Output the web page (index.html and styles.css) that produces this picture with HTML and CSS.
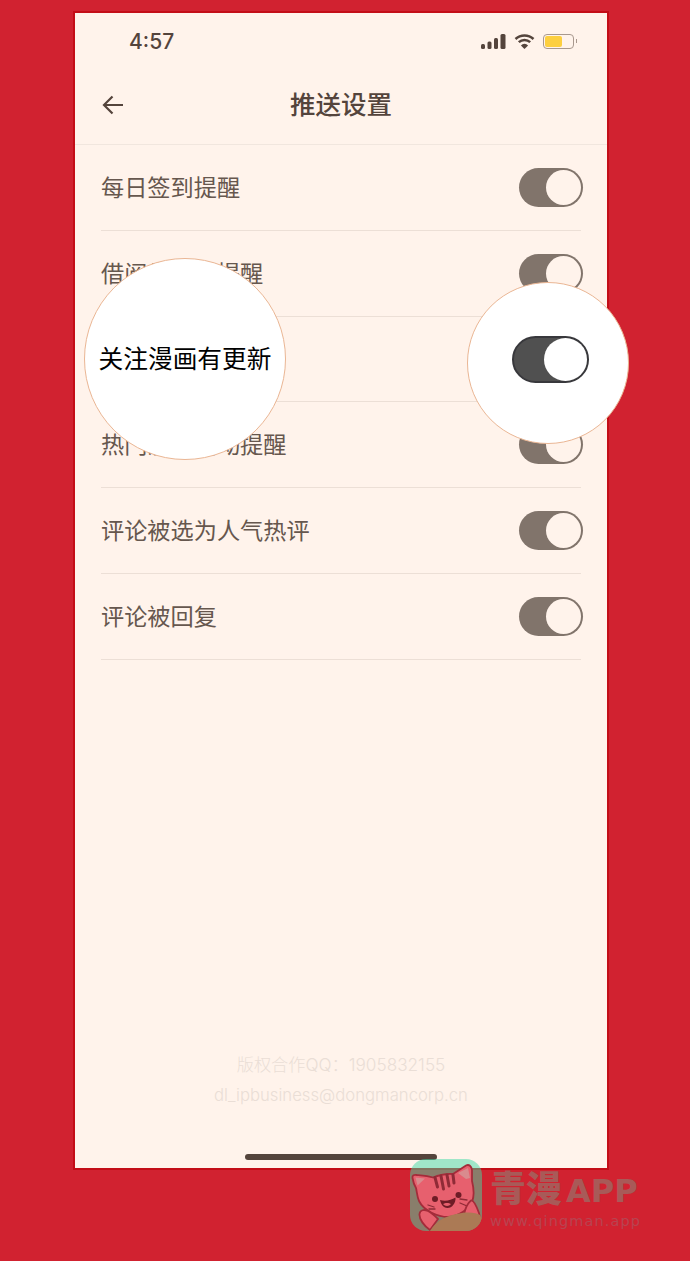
FILE: index.html
```html
<!DOCTYPE html>
<html lang="zh-CN">
<head>
    <meta charset="UTF-8">
    <meta name="viewport" content="width=device-width, initial-scale=1.0">
    <title>推送设置</title>
    <link rel="stylesheet" href="styles.css">
</head>
<body>
    <div class="phone">
        <div class="status">
            <span class="time">4:57</span>
            <div class="status-icons">
                <svg width="25" height="15" viewBox="0 0 25 15">
                    <rect x="0" y="10" width="4" height="5" rx="1.5" fill="#54443c"/>
                    <rect x="6.5" y="7.5" width="4" height="7.5" rx="1.5" fill="#54443c"/>
                    <rect x="13" y="4" width="4" height="11" rx="1.5" fill="#54443c"/>
                    <rect x="19.5" y="0" width="5" height="15" rx="1.5" fill="#54443c"/>
                </svg>
                <svg width="21" height="16" viewBox="0 0 21 16">
                    <path d="M1.5 6a13 13 0 0 1 18 0M4.8 9.2a8.4 8.4 0 0 1 11.4 0" fill="none" stroke="#54443c" stroke-width="2.5"/>
                    <path d="M10.5 16l-3.6-3.6a5 5 0 0 1 7.2 0z" fill="#54443c"/>
                </svg>
                <div class="battery"><div class="battery-fill"></div></div>
                <div class="battery-cap"></div>
            </div>
        </div>
        <div class="nav">
            <svg class="back" width="22" height="20" viewBox="0 0 22 20">
                <path d="M21 10H2M10.5 1.5L2 10l8.5 8.5" fill="none" stroke="#54443c" stroke-width="2.2"/>
            </svg>
            <h1>推送设置</h1>
        </div>
        <ul class="list">
            <li class="row"><span>每日签到提醒</span><div class="toggle"><div class="knob"></div></div></li>
            <li class="row"><span>借阅券到期提醒</span><div class="toggle"><div class="knob"></div></div></li>
            <li class="row"><span>关注漫画有更新</span><div class="toggle"><div class="knob"></div></div></li>
            <li class="row"><span>热门漫画活动提醒</span><div class="toggle"><div class="knob"></div></div></li>
            <li class="row"><span>评论被选为人气热评</span><div class="toggle"><div class="knob"></div></div></li>
            <li class="row"><span>评论被回复</span><div class="toggle"><div class="knob"></div></div></li>
        </ul>
        <div class="footer">
            <p>版权合作QQ：1905832155</p>
            <p>dl_ipbusiness@dongmancorp.cn</p>
        </div>
        <div class="home-bar"></div>
    </div>

    <div class="bubble bubble-text"><span>关注漫画有更新</span></div>
    <div class="bubble bubble-toggle">
        <div class="toggle-big"><div class="knob-big"></div></div>
    </div>

    <div class="mark">
        <div class="logo">
            <svg width="72" height="72" viewBox="0 0 72 72">
                <path d="M2.5 19C2 16 4 15.5 7 16C12 16.5 18 17 23 18.5C30 15.5 37 14.5 43 15L56 6.5C59 5 61.5 7 62 11L62 22C64 30 64 38 62 43C59 50 48 58 38 58C28 58 14 52 9 42C7 37 7 33 6 29C4 26 3 22 2.5 19Z" fill="#e7606e" stroke="#a42c3a" stroke-width="1.8" stroke-linejoin="round"/>
                <path d="M5.5 18.5L15 19.5L7.5 26.5ZM48 14L58 9L60 19L56 20Z" fill="#d98b8e"/>
                <path d="M25 18.5L27.5 28M31 17L33.5 30M37 16L39 27M43 16L44 24" stroke="#8f2b37" stroke-width="3" stroke-linecap="round" fill="none"/>
                <circle cx="25" cy="40" r="3" fill="#6e1c26"/>
                <circle cx="48.5" cy="36" r="3" fill="#6e1c26"/>
                <path d="M30 41C35 42.5 41 41.5 45.5 38.5C46 44 42 49 37.5 49C33 49 31 45 30 41Z" fill="#6e1c26"/>
                <path d="M33 45C35 43.5 39 43.5 41 45C39 47.5 35 47.5 33 45Z" fill="#e7606e"/>
                <path d="M18 46L24 48M19 50L25 50M50 40L57 41M50 44L57 47" stroke="#8f2b37" stroke-width="1.3" stroke-linecap="round" fill="none"/>
                <path d="M20 71C14 67 9 60 9.5 55C10 51 14 50 18 52C22 54 25 57 28 60Z" fill="#e7606e" stroke="#a42c3a" stroke-width="1.8" stroke-linejoin="round"/>
                <path d="M54 56C55 50 58 44 61 41.500C63 41 66 46 69 54L70 60Z" fill="#e7606e" stroke="#a42c3a" stroke-width="1.8" stroke-linejoin="round"/>
                <path d="M20 72C26 62 36 56 52 54C60 53 67 54 70 56L72 60V58C72 66 66 72 58 72Z" fill="#ab7a55"/>
            </svg>
        </div>
        <div class="brand">
            <div class="brand-name">青漫<span class="brand-app">APP</span></div>
            <div class="brand-url">www.qingman.app</div>
        </div>
    </div>
</body>
</html>
```

FILE: styles.css
```css
*{
    margin: 0;
    padding: 0;
    box-sizing: border-box;
}
html, body{
    height: 100%;
}
body{
    position: relative;
    overflow: hidden;
    background-color: #d12230;
    font-family: "Noto Sans CJK SC", "Liberation Sans", sans-serif;
    padding: 11px 81px 0 73px;
}
.phone{
    position: relative;
    width: 536px;
    height: 1159px;
    background-color: #fff3eb;
    border: 2px solid #c30d17;
    color: #54443c;
    display: flex;
    flex-direction: column;
}
.status{
    height: 56px;
    padding: 0 30px 0 54px;
    display: flex;
    justify-content: space-between;
    align-items: center;
}
.time{
    font-family: Inter, "Liberation Sans", sans-serif;
    font-size: 21px;
    font-weight: 500;
}
.status-icons{
    display: flex;
    align-items: center;
    gap: 8px;
}
.battery{
    width: 31px;
    height: 15px;
    border: 1px solid #a8988e;
    border-radius: 4px;
    padding: 1px;
}
.battery-fill{
    width: 17px;
    height: 11px;
    background-color: #fdcf3f;
    border-radius: 2px;
}
.battery-cap{
    width: 1px;
    height: 4px;
    margin-left: -6px;
    background-color: #a8988e;
}
.nav{
    position: relative;
    height: 76px;
    padding-bottom: 7px;
    border-bottom: 1px solid #f1e6de;
    display: flex;
    align-items: center;
    justify-content: center;
}
.nav h1{
    font-size: 25.5px;
    font-weight: 500;
    line-height: 1;
}
.back{
    position: absolute;
    left: 27px;
    top: 26px;
}
.list{
    list-style: none;
    padding: 0 26px 0 26px;
}
.row{
    height: 85.8px;
    border-bottom: 1px solid #ecdfd6;
    display: flex;
    justify-content: space-between;
    align-items: center;
    font-size: 23.2px;
    color: #66574e;
}
.row span{
    padding-bottom: 3px;
}
.toggle{
    width: 64px;
    height: 39px;
    margin-right: -2px;
    border-radius: 20px;
    background-color: #81746b;
    position: relative;
}
.knob{
    position: absolute;
    right: 2px;
    top: 2px;
    width: 35px;
    height: 35px;
    border-radius: 50%;
    background-color: #fff3eb;
}
.footer{
    margin-top: auto;
    margin-bottom: 57px;
    text-align: center;
    color: #eaded6;
    font-family: Inter, "Noto Sans CJK SC", sans-serif;
    font-size: 16.7px;
    font-weight: 300;
    line-height: 31px;
}
.footer p:first-child{
    font-size: 17.2px;
}
.home-bar{
    position: absolute;
    left: 170px;
    bottom: 8px;
    width: 192px;
    height: 6px;
    border-radius: 3px;
    background-color: #54443c;
}
.bubble{
    position: absolute;
    background-color: #fff;
    border: 1px solid #eab694;
    border-radius: 50%;
    display: flex;
    align-items: center;
    justify-content: center;
}
.bubble-text{
    left: 84px;
    top: 258px;
    width: 202px;
    height: 202px;
    padding-bottom: 5px;
    font-size: 24.7px;
    color: #000;
}
.bubble-toggle{
    left: 467px;
    top: 282px;
    width: 162px;
    height: 162px;
    padding: 0 0 7px 4px;
}
.toggle-big{
    position: relative;
    width: 77px;
    height: 47px;
    border-radius: 24px;
    background-color: #505050;
    border: 2px solid #38383c;
}
.knob-big{
    position: absolute;
    right: 0;
    top: 0;
    width: 43px;
    height: 43px;
    border-radius: 50%;
    background-color: #fff;
}
.mark{
    position: absolute;
    left: 410px;
    top: 1159px;
    display: flex;
    gap: 8px;
}
.logo{
    width: 72px;
    height: 72px;
    border-radius: 16px;
    overflow: hidden;
    background-color: rgba(65, 218, 165, 0.5);
}
.brand{
    padding-top: 8px;
}
.brand-name{
    font-size: 36px;
    line-height: 38px;
    font-weight: 900;
    color: #a85a58;
    white-space: nowrap;
}
.brand-app{
    font-family: "DejaVu Sans", sans-serif;
    font-size: 32px;
    font-weight: 700;
    margin-left: 4px;
}
.brand-url{
    margin-top: 3px;
    font-family: "DejaVu Sans", sans-serif;
    font-size: 14.5px;
    letter-spacing: 1.1px;
    color: #b84450;
    white-space: nowrap;
}
```
